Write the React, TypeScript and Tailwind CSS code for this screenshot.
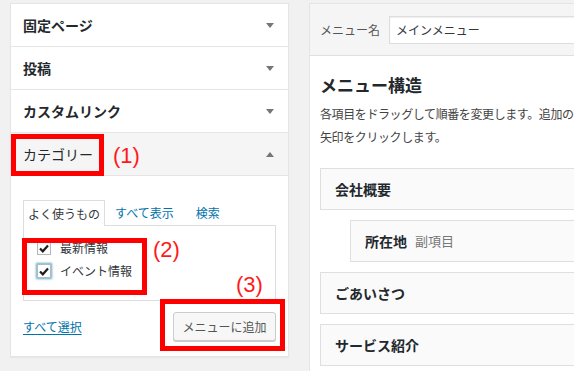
import React from "react";

const FONT = { fontFamily: '"Noto Sans CJK JP", "Noto Sans", sans-serif' };

function Arrow({ up = false }: { up?: boolean }) {
  return (
    <svg width="8" height="5" viewBox="0 0 8 5" className="shrink-0">
      {up ? <polygon points="0,5 8,5 4,0" fill="#72777c" /> : <polygon points="0,0 8,0 4,5" fill="#72777c" />}
    </svg>
  );
}

function Check({ focused = false }: { focused?: boolean }) {
  return (
    <span
      className={`w-[14px] h-[14px] border border-[#b4b9be] bg-white flex items-center justify-center shrink-0 ${
        focused ? "shadow-[0_0_2px_1px_rgba(30,140,190,0.7)] border-[#5b9dd9]" : "shadow-[inset_0_1px_2px_rgba(0,0,0,0.1)]"
      }`}
    >
      <svg width="10" height="9" viewBox="0 0 10 9">
        <path d="M1 4.5 L3.8 7.3 L9 1.5" stroke="#1e1e1e" strokeWidth="2.2" fill="none" />
      </svg>
    </span>
  );
}

function RedNote({ label, className }: { label: string; className: string }) {
  return (
    <span
      className={`absolute text-[22px] leading-none text-[#ff1a1a] ${className}`}
      style={{ fontFamily: '"Liberation Sans", Arial, sans-serif' }}
    >
      {label}
    </span>
  );
}

const rows = ["固定ページ", "投稿", "カスタムリンク"];
const menuItems = [
  { title: "会社概要", sub: "", indent: false },
  { title: "所在地", sub: "副項目", indent: true },
  { title: "ごあいさつ", sub: "", indent: false },
  { title: "サービス紹介", sub: "", indent: false },
];

export default function App() {
  return (
    <div
      className="w-[574px] h-[371px] overflow-hidden bg-[#f1f1f1] flex items-start pt-[3px] pl-[10px] gap-[20px]"
      style={FONT}
    >
      {/* Left: accordion */}
      <div className="relative w-[279px] shrink-0 bg-white border border-[#e5e5e5] shadow-[0_1px_1px_rgba(0,0,0,0.04)]">
        {rows.map((r) => (
          <div
            key={r}
            className="h-[43px] border-b border-[#e5e5e5] flex items-center justify-between pl-[12px] pr-[14px]"
          >
            <span className="text-[14px] font-bold text-[#23282d]">{r}</span>
            <Arrow />
          </div>
        ))}
        <div className="h-[43px] border-b border-[#e5e5e5] bg-[#f5f5f5] flex items-center justify-between pl-[12px] pr-[14px]">
          <span className="text-[14px] text-[#23282d]">カテゴリー</span>
          <Arrow up />
        </div>

        <div className="pt-[24px] px-[12px] pb-[15px]">
          <div className="flex items-end h-[25px] text-[12px]">
            <div className="relative z-10 h-[26px] w-[82px] -mb-px bg-white border border-b-0 border-[#ddd] flex items-center justify-center text-[#32373c]">
              よく使うもの
            </div>
            <span className="ml-[10px] h-[25px] flex items-center text-[#0073aa]">すべて表示</span>
            <span className="ml-[22px] h-[25px] flex items-center text-[#0073aa]">検索</span>
          </div>
          <div className="h-[76px] border border-[#ddd] pt-[15px] pl-[13px] flex flex-col gap-[9px]">
            <label className="flex items-center gap-[9px] text-[12px] leading-[14px] text-[#32373c]">
              <Check />
              最新情報
            </label>
            <label className="flex items-center gap-[9px] text-[12px] leading-[14px] text-[#32373c]">
              <Check focused />
              イベント情報
            </label>
          </div>
          <div className="mt-[11px] flex items-center justify-between">
            <span className="text-[12px] text-[#0073aa] underline underline-offset-2">すべて選択</span>
            <button className="h-[29px] w-[103px] rounded-[3px] border border-[#ccc] bg-[#f7f7f7] text-[12px] text-[#555] shadow-[0_1px_0_#ccc]">
              メニューに追加
            </button>
          </div>
        </div>

        {/* annotations */}
        <div className="absolute left-0 top-[130px] w-[93px] h-[42px] border-[5px] border-[#ff0000]" />
        <div className="absolute left-[11px] top-[234px] w-[125px] h-[57px] border-[5px] border-[#ff0000]" />
        <div className="absolute left-[149px] top-[295px] w-[125px] h-[52px] border-[5px] border-[#ff0000]" />
        <RedNote label="(1)" className="left-[102px] top-[141px]" />
        <RedNote label="(2)" className="left-[142px] top-[235px]" />
        <RedNote label="(3)" className="left-[225px] top-[270px]" />
      </div>

      {/* Right: menu structure */}
      <div className="w-[620px] shrink-0 bg-white border border-[#e5e5e5]">
        <div className="h-[52px] bg-[#f5f5f5] border-b border-[#dfdfdf] flex items-center pl-[10px]">
          <span className="text-[12px] text-[#555]">メニュー名</span>
          <div className="ml-[9px] h-[28px] w-[400px] bg-white border border-[#ddd] flex items-center pl-[6px] text-[12px] text-[#32373c] shadow-[inset_0_1px_2px_rgba(0,0,0,0.07)]">
            メインメニュー
          </div>
        </div>
        <div className="pl-[10px] pt-[18px] pb-[20px]">
          <h2 className="text-[17px] leading-[22px] font-semibold text-[#23282d]">メニュー構造</h2>
          <p className="mt-[6px] text-[12px] leading-[23px] tracking-[-0.4px] text-[#444]">
            <span className="block whitespace-nowrap">
              各項目をドラッグして順番を変更します。追加の設定オプションを表示するには、項目の右側にある
            </span>
            <span className="block">矢印をクリックします。</span>
          </p>
          <div className="mt-[20px] flex flex-col gap-[10px]">
            {menuItems.map((m) => (
              <div
                key={m.title}
                className={`h-[42px] w-[400px] border border-[#dfdfdf] bg-[#fafafa] flex items-center pl-[14px] ${
                  m.indent ? "ml-[30px]" : ""
                }`}
              >
                <span className="text-[14px] font-bold text-[#23282d]">{m.title}</span>
                {m.sub && <span className="ml-[8px] text-[13px] text-[#777]">{m.sub}</span>}
              </div>
            ))}
          </div>
        </div>
      </div>
    </div>
  );
}
